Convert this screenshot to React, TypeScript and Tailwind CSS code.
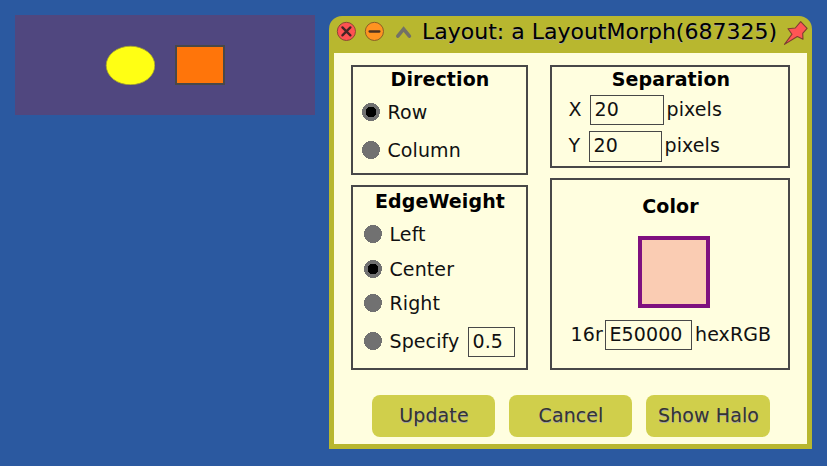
import type { ReactNode } from "react";

function Radio({ on = false }: { on?: boolean }) {
  return (
    <svg className="mt-[2px] block shrink-0" width="18" height="18" viewBox="0 0 18 18" shapeRendering="crispEdges">
      <circle cx="9" cy="9" r="9" fill="#717171" />
      {on && <circle cx="9" cy="9" r="5.4" fill="#000" />}
    </svg>
  );
}

function Option({ label, on, className }: { label: string; on?: boolean; className: string }) {
  return (
    <div className={`flex h-[22px] items-start gap-[7.5px] ${className}`}>
      <Radio on={on} />
      <span>{label}</span>
    </div>
  );
}

function Field({ value, className }: { value: string; className: string }) {
  return <div className={`shrink-0 border border-[#484848] pt-[2px] pl-[3.5px] ${className}`}>{value}</div>;
}

function Group({ title, className, titleClass, children }: { title: string; className: string; titleClass: string; children: ReactNode }) {
  return (
    <section className={`flex flex-col border-2 border-[#484848] ${className}`}>
      <h2 className={`text-center font-bold text-black ${titleClass}`}>{title}</h2>
      {children}
    </section>
  );
}

function Button({ label, className }: { label: string; className: string }) {
  return (
    <button
      className={`flex h-[42px] items-start justify-center rounded-[8px] bg-[#d0cf4b] pt-[9px] pl-[1px] text-[#343434] [text-shadow:0px_1px_0px_#a3a3a3] ${className}`}
    >
      {label}
    </button>
  );
}

function TitleBar() {
  return (
    <header className="flex h-[37px] items-start pl-[7px]">
      <svg className="mt-[5px] block shrink-0" width="20" height="20" viewBox="0 0 20 20">
        <circle cx="10.4" cy="10.4" r="9.1" fill="#ff5252" stroke="#8b4a33" strokeWidth="1" />
        <path d="M6.4 6.4l8 8M14.4 6.4l-8 8" stroke="#442525" strokeWidth="2.3" strokeLinecap="round" />
      </svg>
      <svg className="mt-[5px] ml-[8px] block shrink-0" width="20" height="20" viewBox="0 0 20 20">
        <circle cx="10.4" cy="10.4" r="9.1" fill="#ff9321" stroke="#8b5f25" strokeWidth="1" />
        <path d="M5.6 10.5h9.8" stroke="#4d3320" strokeWidth="2.3" strokeLinecap="round" />
      </svg>
      <svg className="mt-[5px] ml-[9px] block shrink-0" width="20" height="20" viewBox="0 0 20 20">
        <path d="M4.8 15.2L10.6 8l5.8 7.2" fill="none" stroke="#727167" strokeWidth="3.6" strokeLinecap="round" />
      </svg>
      <h1 className="mt-[3px] ml-[9px] w-[356px] shrink-0 text-[22px] leading-[26px] tracking-normal whitespace-nowrap text-black [text-shadow:0px_1px_0px_#a3a3a3]">
        Layout: a LayoutMorph(687325)
      </h1>
      <svg className="mt-[4px] ml-[2px] block shrink-0" width="28" height="28" viewBox="0 0 28 28">
        <path
          d="M20.7 1.7L27.1 8.3L22.7 13.3L23 19.2L17.3 16.5L4.5 24.4L12 14.2L8 8.7L15.3 8Z"
          fill="#ff5555"
          stroke="#7d3d32"
          strokeWidth="1.1"
          strokeLinejoin="round"
        />
      </svg>
    </header>
  );
}

export default function App() {
  return (
    <div className="flex h-[466px] w-[827px] items-start overflow-hidden bg-[#2b59a0] pt-[15px] pl-[15px] font-['DejaVu_Sans',sans-serif] text-[19px] leading-[22px] tracking-[0.1px] text-[#111]">
      <div className="flex h-[100px] w-[300px] shrink-0 items-start bg-[#50477f] pt-[30px] pl-[90px]">
        <svg className="block shrink-0" width="50" height="40" viewBox="0 0 50 40">
          <ellipse cx="25.5" cy="20.5" rx="24.3" ry="19.3" fill="#ffff14" stroke="#a5a52c" strokeWidth="0.8" />
        </svg>
        <div className="ml-5 h-[40px] w-[50px] border-2 border-[#484848] bg-[#ff750a]" />
      </div>

      <div className="mt-px ml-[14px] h-[433px] w-[483px] shrink-0 rounded-t-[13px] bg-[#b8b72f]">
        <TitleBar />
        <main className="mx-[5px] flex h-[391px] flex-col bg-[#fffedf] pt-[12px] pl-[17px]">
          <div className="flex gap-[22px]">
            <div className="flex flex-col gap-[10px]">
              <Group title="Direction" className="h-[110px] w-[177px]" titleClass="mt-px pl-[1px]">
                <Option label="Row" on className="mt-[11px] ml-[9px]" />
                <Option label="Column" className="mt-[16px] ml-[9px]" />
              </Group>
              <Group title="EdgeWeight" className="h-[185px] w-[177px]" titleClass="mt-[3px] pl-[1px]">
                <Option label="Left" className="mt-[11px] ml-[11px]" />
                <Option label="Center" on className="mt-[13px] ml-[11px]" />
                <Option label="Right" className="mt-[12px] ml-[11px]" />
                <div className="mt-[13px] flex items-start">
                  <Option label="Specify" className="mt-[3px] ml-[11px] w-[104px]" />
                  <Field value="0.5" className="h-[30px] w-[47px]" />
                </div>
              </Group>
            </div>
            <div className="flex flex-col gap-[10px]">
              <Group title="Separation" className="h-[103px] w-[240px]" titleClass="mt-px pl-[2px]">
                <div className="mt-[5px] flex items-start pl-[16px]">
                  <span className="mt-[3px] w-[22px] pl-[0.5px]">X</span>
                  <Field value="20" className="h-[30px] w-[74px]" />
                  <span className="mt-[3px] ml-[2.5px]">pixels</span>
                </div>
                <div className="mt-[6px] flex items-start pl-[16px]">
                  <span className="mt-[3px] w-[21px] pl-[0.5px]">Y</span>
                  <Field value="20" className="h-[31px] w-[73px]" />
                  <span className="mt-[3px] ml-[2.5px]">pixels</span>
                </div>
              </Group>
              <Group title="Color" className="h-[192px] w-[240px]" titleClass="mt-[15px] pl-[1px]">
                <div className="mt-[19px] ml-[86px] h-[72px] w-[72px] border-4 border-[#7f107f] bg-[#faccb3]" />
                <div className="mt-[12px] flex items-start pl-[18.5px]">
                  <span className="mt-[3px] w-[34.5px]">16r</span>
                  <Field value="E50000" className="h-[30px] w-[87px]" />
                  <span className="mt-[3px] ml-[3px]">hexRGB</span>
                </div>
              </Group>
            </div>
          </div>
          <div className="mt-[25px] flex gap-[14px] pl-[21px]">
            <Button label="Update" className="w-[123px]" />
            <Button label="Cancel" className="w-[123px]" />
            <Button label="Show Halo" className="w-[124px]" />
          </div>
        </main>
      </div>
    </div>
  );
}
